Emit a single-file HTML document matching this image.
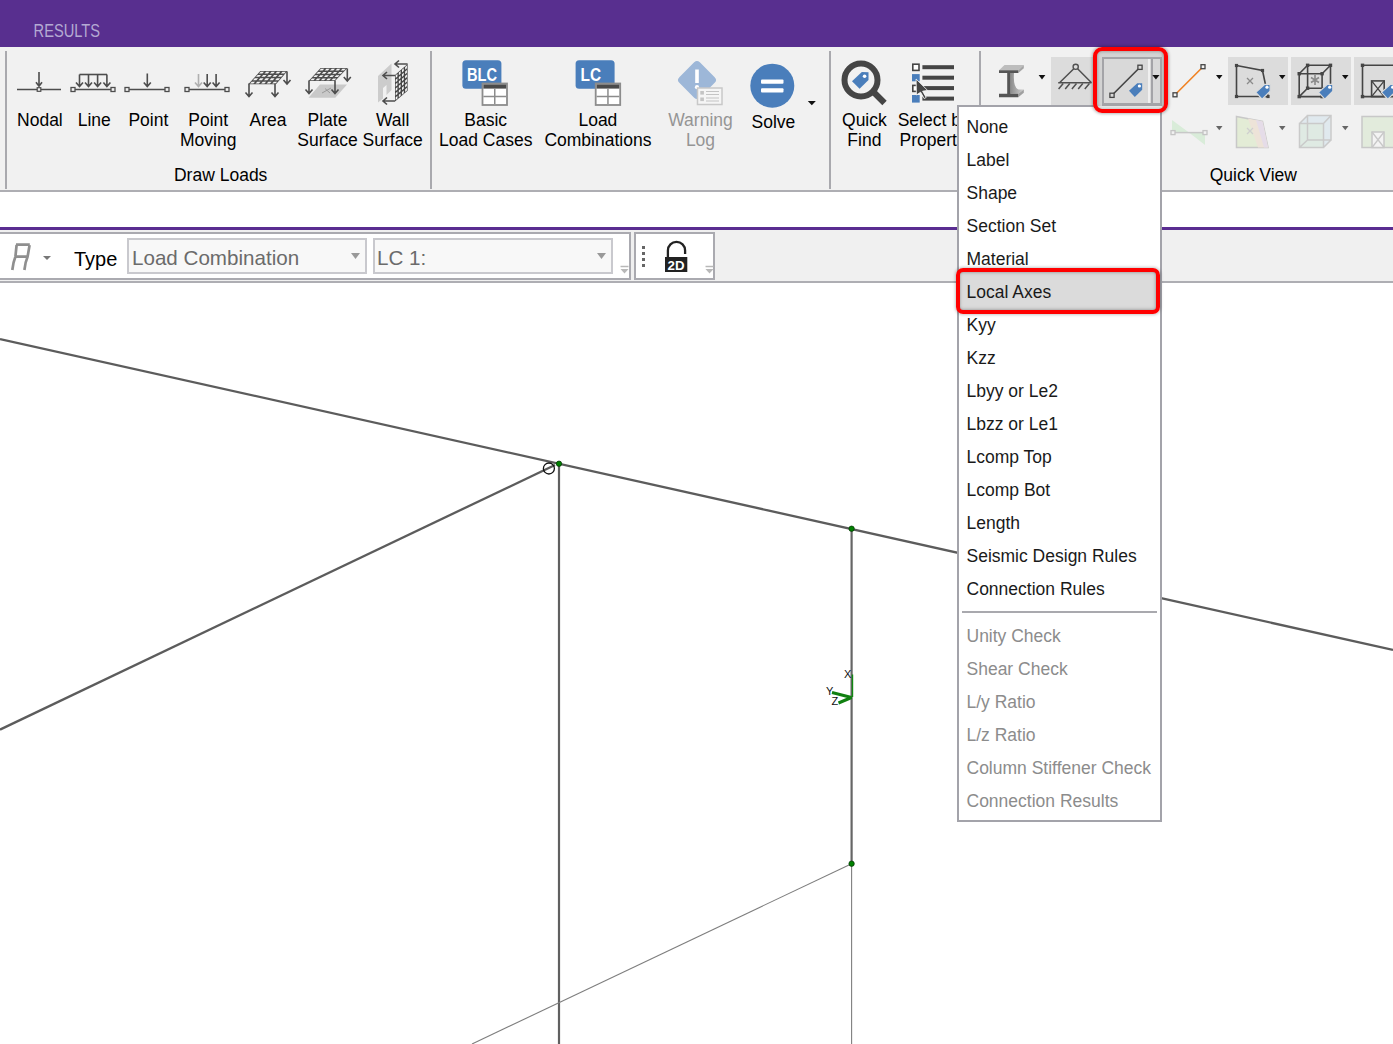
<!DOCTYPE html>
<html><head><meta charset="utf-8"><style>
html,body{margin:0;padding:0;}
body{width:1393px;height:1044px;overflow:hidden;position:relative;background:#fff;font-family:"Liberation Sans", sans-serif;}
.t{position:absolute;line-height:1;white-space:pre;}
</style></head><body>
<div style="position:absolute;left:0px;top:0px;width:1393px;height:47px;background:#582f8f;"></div>
<div style="position:absolute;left:0px;top:47px;width:1393px;height:143px;background:#f1f1f1;"></div>
<div style="position:absolute;left:0px;top:190px;width:1393px;height:2px;background:#aeaeb3;"></div>
<div style="position:absolute;left:0px;top:227px;width:1393px;height:3px;background:#5a2d91;"></div>
<div style="position:absolute;left:0px;top:230px;width:1393px;height:51px;background:#f0f0f0;"></div>
<div style="position:absolute;left:0px;top:281px;width:1393px;height:2px;background:#aeaeb3;"></div>
<div style="position:absolute;left:-2px;top:232px;width:629px;height:44px;background:#fff;border:2px solid #aaaab0;"></div>
<div style="position:absolute;left:634px;top:232px;width:77px;height:44px;background:#fff;border:2px solid #aaaab0;"></div>
<div style="position:absolute;left:127px;top:238px;width:236px;height:32px;background:#f8f8f8;border:2px solid #c9c9ce;"></div>
<div style="position:absolute;left:373px;top:238px;width:236px;height:32px;background:#f8f8f8;border:2px solid #c9c9ce;"></div>
<div style="position:absolute;left:5px;top:51px;width:2px;height:138px;background:#a9a9ae;"></div>
<div style="position:absolute;left:430px;top:51px;width:2px;height:138px;background:#a9a9ae;"></div>
<div style="position:absolute;left:829px;top:51px;width:2px;height:138px;background:#a9a9ae;"></div>
<div style="position:absolute;left:979px;top:51px;width:2px;height:138px;background:#a9a9ae;"></div>
<div style="position:absolute;left:1051px;top:57px;width:42px;height:48px;background:#dcdcdc;"></div>
<div style="position:absolute;left:1228px;top:57px;width:60px;height:48px;background:#dcdcdc;"></div>
<div style="position:absolute;left:1291px;top:57px;width:60px;height:48px;background:#dcdcdc;"></div>
<div style="position:absolute;left:1354px;top:57px;width:60px;height:48px;background:#dcdcdc;"></div>
<svg style="position:absolute;left:0;top:0" width="1393" height="1044" viewBox="0 0 1393 1044"><path d="M17 89.5H61" stroke="#4d4d4d" stroke-width="1.6"/><rect x="37.2" y="87.7" width="3.6" height="3.6" fill="#f1f1f1" stroke="#4d4d4d" stroke-width="1.2"/><path d="M39 72V85.7M36 82.2L39 86.2L42 82.2" fill="none" stroke="#4d4d4d" stroke-width="1.6"/>
<path d="M73 89.5H113" stroke="#4d4d4d" stroke-width="1.6"/><rect x="71.0" y="87.5" width="4" height="4" fill="#f1f1f1" stroke="#4d4d4d" stroke-width="1.3"/><rect x="111.0" y="87.5" width="4" height="4" fill="#f1f1f1" stroke="#4d4d4d" stroke-width="1.3"/>
<path d="M79.5 74.5H107" stroke="#4d4d4d" stroke-width="1.6"/>
<path d="M79.5 74.5V86.0M76.0 82.5L79.5 86.5L83.0 82.5" fill="none" stroke="#4d4d4d" stroke-width="1.6"/>
<path d="M88.5 74.5V86.0M85.0 82.5L88.5 86.5L92.0 82.5" fill="none" stroke="#4d4d4d" stroke-width="1.6"/>
<path d="M97.6 74.5V86.0M94.1 82.5L97.6 86.5L101.1 82.5" fill="none" stroke="#4d4d4d" stroke-width="1.6"/>
<path d="M106.9 74.5V86.0M103.4 82.5L106.9 86.5L110.4 82.5" fill="none" stroke="#4d4d4d" stroke-width="1.6"/>
<path d="M127 89.5H167" stroke="#4d4d4d" stroke-width="1.6"/><rect x="125.0" y="87.5" width="4" height="4" fill="#f1f1f1" stroke="#4d4d4d" stroke-width="1.3"/><rect x="165.0" y="87.5" width="4" height="4" fill="#f1f1f1" stroke="#4d4d4d" stroke-width="1.3"/><path d="M147.3 73.5V86.0M143.8 82.5L147.3 86.5L150.8 82.5" fill="none" stroke="#4d4d4d" stroke-width="1.6"/>
<path d="M187 89.5H227" stroke="#4d4d4d" stroke-width="1.6"/><rect x="185.0" y="87.5" width="4" height="4" fill="#f1f1f1" stroke="#4d4d4d" stroke-width="1.3"/><rect x="225.0" y="87.5" width="4" height="4" fill="#f1f1f1" stroke="#4d4d4d" stroke-width="1.3"/>
<path d="M198.5 74V86.0M195.0 82.5L198.5 86.5L202.0 82.5" fill="none" stroke="#b0b0b0" stroke-width="1.6"/><path d="M207.2 74V86.0M203.7 82.5L207.2 86.5L210.7 82.5" fill="none" stroke="#4d4d4d" stroke-width="1.6"/><path d="M216.1 74V86.0M212.6 82.5L216.1 86.5L219.6 82.5" fill="none" stroke="#4d4d4d" stroke-width="1.6"/>
<polygon points="260.3,71 287.5,71 276,84.2 248.3,84.2" fill="#4d4d4d"/><polygon points="260.73,71.73 264.00,71.73 262.33,73.57 259.05,73.57" fill="#f4f4f4"/><polygon points="266.17,71.73 269.44,71.73 267.79,73.57 264.51,73.57" fill="#f4f4f4"/><polygon points="271.62,71.73 274.89,71.73 273.25,73.57 269.97,73.57" fill="#f4f4f4"/><polygon points="277.07,71.73 280.33,71.73 278.71,73.57 275.43,73.57" fill="#f4f4f4"/><polygon points="282.51,71.73 285.78,71.73 284.17,73.57 280.89,73.57" fill="#f4f4f4"/><polygon points="257.73,75.03 261.02,75.03 259.35,76.87 256.06,76.87" fill="#f4f4f4"/><polygon points="263.20,75.03 266.49,75.03 264.83,76.87 261.54,76.87" fill="#f4f4f4"/><polygon points="268.68,75.03 271.96,75.03 270.32,76.87 267.03,76.87" fill="#f4f4f4"/><polygon points="274.15,75.03 277.43,75.03 275.80,76.87 272.51,76.87" fill="#f4f4f4"/><polygon points="279.62,75.03 282.90,75.03 281.29,76.87 277.99,76.87" fill="#f4f4f4"/><polygon points="254.74,78.33 258.04,78.33 256.37,80.17 253.06,80.17" fill="#f4f4f4"/><polygon points="260.23,78.33 263.53,78.33 261.88,80.17 258.57,80.17" fill="#f4f4f4"/><polygon points="265.73,78.33 269.03,78.33 267.39,80.17 264.08,80.17" fill="#f4f4f4"/><polygon points="271.23,78.33 274.52,78.33 272.90,80.17 269.59,80.17" fill="#f4f4f4"/><polygon points="276.72,78.33 280.02,78.33 278.41,80.17 275.10,80.17" fill="#f4f4f4"/><polygon points="251.74,81.63 255.06,81.63 253.39,83.47 250.07,83.47" fill="#f4f4f4"/><polygon points="257.26,81.63 260.58,81.63 258.92,83.47 255.60,83.47" fill="#f4f4f4"/><polygon points="262.79,81.63 266.10,81.63 264.46,83.47 261.14,83.47" fill="#f4f4f4"/><polygon points="268.31,81.63 271.62,81.63 269.99,83.47 266.67,83.47" fill="#f4f4f4"/><polygon points="273.83,81.63 277.14,81.63 275.53,83.47 272.20,83.47" fill="#f4f4f4"/>
<path d="M249 83.5V96.0M245.5 92.5L249 96.5L252.5 92.5" fill="none" stroke="#4d4d4d" stroke-width="1.6"/><path d="M275 83.5V96.0M271.5 92.5L275 96.5L278.5 92.5" fill="none" stroke="#4d4d4d" stroke-width="1.6"/><path d="M287 71.5V83.5M283.5 80L287 84L290.5 80" fill="none" stroke="#4d4d4d" stroke-width="1.6"/>
<polygon points="320,84.5 347,84.5 335.3,97.8 308.5,97.8" fill="#c9c9c9"/>
<path d="M322 93L331 88M325 88.5L330 93" stroke="#999" stroke-width="1"/>
<polygon points="320.6,68 347.5,68 335,81 308.6,81" fill="#4d4d4d"/><polygon points="321.01,68.72 324.24,68.72 322.55,70.53 319.33,70.53" fill="#f4f4f4"/><polygon points="326.39,68.72 329.61,68.72 327.91,70.53 324.69,70.53" fill="#f4f4f4"/><polygon points="331.76,68.72 334.99,68.72 333.27,70.53 330.05,70.53" fill="#f4f4f4"/><polygon points="337.14,68.72 340.36,68.72 338.63,70.53 335.41,70.53" fill="#f4f4f4"/><polygon points="342.51,68.72 345.74,68.72 343.99,70.53 340.77,70.53" fill="#f4f4f4"/><polygon points="318.01,71.97 321.22,71.97 319.53,73.78 316.33,73.78" fill="#f4f4f4"/><polygon points="323.36,71.97 326.57,71.97 324.86,73.78 321.66,73.78" fill="#f4f4f4"/><polygon points="328.71,71.97 331.92,71.97 330.20,73.78 327.00,73.78" fill="#f4f4f4"/><polygon points="334.06,71.97 337.27,71.97 335.53,73.78 332.33,73.78" fill="#f4f4f4"/><polygon points="339.41,71.97 342.62,71.97 340.87,73.78 337.67,73.78" fill="#f4f4f4"/><polygon points="315.00,75.22 318.20,75.22 316.51,77.03 313.32,77.03" fill="#f4f4f4"/><polygon points="320.33,75.22 323.52,75.22 321.82,77.03 318.63,77.03" fill="#f4f4f4"/><polygon points="325.65,75.22 328.85,75.22 327.13,77.03 323.94,77.03" fill="#f4f4f4"/><polygon points="330.98,75.22 334.17,75.22 332.44,77.03 329.25,77.03" fill="#f4f4f4"/><polygon points="336.30,75.22 339.50,75.22 337.75,77.03 334.56,77.03" fill="#f4f4f4"/><polygon points="312.00,78.47 315.18,78.47 313.49,80.28 310.32,80.28" fill="#f4f4f4"/><polygon points="317.30,78.47 320.48,78.47 318.77,80.28 315.60,80.28" fill="#f4f4f4"/><polygon points="322.60,78.47 325.78,78.47 324.06,80.28 320.89,80.28" fill="#f4f4f4"/><polygon points="327.90,78.47 331.08,78.47 329.34,80.28 326.17,80.28" fill="#f4f4f4"/><polygon points="333.20,78.47 336.38,78.47 334.63,80.28 331.46,80.28" fill="#f4f4f4"/>
<path d="M309 80.5V93.0M305.5 89.5L309 93.5L312.5 89.5" fill="none" stroke="#4d4d4d" stroke-width="1.6"/><path d="M335 80.5V93.0M331.5 89.5L335 93.5L338.5 89.5" fill="none" stroke="#4d4d4d" stroke-width="1.6"/><path d="M347.3 68.5V80.5M343.8 77L347.3 81L350.8 77" fill="none" stroke="#4d4d4d" stroke-width="1.6"/>
<path d="M378 76L391.5 63.5V90L386.5 95V85L383 88V98.5L378 102.5Z" fill="#cccccc"/>
<polygon points="395,75 407.6,64 407.6,90.8 395,101.4" fill="#444"/><polygon points="395.69,75.28 397.46,73.74 397.46,76.39 395.69,77.92" fill="#f4f4f4"/><polygon points="398.84,72.53 400.61,70.99 400.61,73.65 398.84,75.18" fill="#f4f4f4"/><polygon points="401.99,69.78 403.76,68.24 403.76,70.91 401.99,72.44" fill="#f4f4f4"/><polygon points="405.14,67.04 406.91,65.50 406.91,68.18 405.14,69.71" fill="#f4f4f4"/><polygon points="395.69,79.68 397.46,78.15 397.46,80.80 395.69,82.32" fill="#f4f4f4"/><polygon points="398.84,76.95 400.61,75.42 400.61,78.08 398.84,79.60" fill="#f4f4f4"/><polygon points="401.99,74.22 403.76,72.69 403.76,75.36 401.99,76.88" fill="#f4f4f4"/><polygon points="405.14,71.49 406.91,69.96 406.91,72.64 405.14,74.16" fill="#f4f4f4"/><polygon points="395.69,84.08 397.46,82.56 397.46,85.21 395.69,86.73" fill="#f4f4f4"/><polygon points="398.84,81.37 400.61,79.85 400.61,82.51 398.84,84.02" fill="#f4f4f4"/><polygon points="401.99,78.66 403.76,77.14 403.76,79.80 401.99,81.32" fill="#f4f4f4"/><polygon points="405.14,75.94 406.91,74.42 406.91,77.10 405.14,78.62" fill="#f4f4f4"/><polygon points="395.69,88.49 397.46,86.98 397.46,89.62 395.69,91.13" fill="#f4f4f4"/><polygon points="398.84,85.79 400.61,84.28 400.61,86.94 398.84,88.44" fill="#f4f4f4"/><polygon points="401.99,83.09 403.76,81.58 403.76,84.25 401.99,85.76" fill="#f4f4f4"/><polygon points="405.14,80.40 406.91,78.89 406.91,81.56 405.14,83.07" fill="#f4f4f4"/><polygon points="395.69,92.89 397.46,91.39 397.46,94.04 395.69,95.53" fill="#f4f4f4"/><polygon points="398.84,90.21 400.61,88.71 400.61,91.37 398.84,92.86" fill="#f4f4f4"/><polygon points="401.99,87.53 403.76,86.03 403.76,88.70 401.99,90.19" fill="#f4f4f4"/><polygon points="405.14,84.85 406.91,83.35 406.91,86.03 405.14,87.52" fill="#f4f4f4"/><polygon points="395.69,97.29 397.46,95.80 397.46,98.45 395.69,99.94" fill="#f4f4f4"/><polygon points="398.84,94.63 400.61,93.14 400.61,95.80 398.84,97.28" fill="#f4f4f4"/><polygon points="401.99,91.97 403.76,90.48 403.76,93.14 401.99,94.63" fill="#f4f4f4"/><polygon points="405.14,89.30 406.91,87.81 406.91,90.49 405.14,91.98" fill="#f4f4f4"/>
<path d="M407.6 64H395.5M399 60.5L395 64L399 67.5" fill="none" stroke="#4d4d4d" stroke-width="1.6"/><path d="M395 75.5H383.5M387 72.0L383 75.5L387 79.0" fill="none" stroke="#4d4d4d" stroke-width="1.6"/><path d="M395 101H383.5M387 97.5L383 101L387 104.5" fill="none" stroke="#4d4d4d" stroke-width="1.6"/>
<rect x="462.4" y="60.3" width="39" height="28.5" rx="3.5" fill="#4a7ebb"/><text x="467" y="81.4" font-family="Liberation Sans" font-size="18" font-weight="bold" fill="#fff" textLength="30" lengthAdjust="spacingAndGlyphs">BLC</text><rect x="482.5" y="83.5" width="24.5" height="21.5" fill="#fff" stroke="#8c8c8c" stroke-width="1.8"/><rect x="483.4" y="84.4" width="22.7" height="4.2" fill="#4a4a4a"/><path d="M483.4 96.6H506.1M494.75 88.6V104.1" stroke="#8c8c8c" stroke-width="1.5"/>
<rect x="575.6" y="60.3" width="39" height="28.5" rx="3.5" fill="#4a7ebb"/><text x="580.5" y="81.4" font-family="Liberation Sans" font-size="18" font-weight="bold" fill="#fff" textLength="20.5" lengthAdjust="spacingAndGlyphs">LC</text><rect x="595.7" y="83.5" width="24.5" height="21.5" fill="#fff" stroke="#8c8c8c" stroke-width="1.8"/><rect x="596.6" y="84.4" width="22.7" height="4.2" fill="#4a4a4a"/><path d="M596.6 96.6H619.3000000000001M607.95 88.6V104.1" stroke="#8c8c8c" stroke-width="1.5"/>
<rect x="682.5" y="65.5" width="29" height="29" rx="4" transform="rotate(45 697 80)" fill="#9db7d8"/>
<rect x="695.2" y="69.5" width="3.6" height="13.5" fill="#fff"/><circle cx="697" cy="87.2" r="2.1" fill="#fff"/>
<rect x="697.5" y="88" width="24.5" height="16.5" fill="#f5f5f5" stroke="#c8c8c8" stroke-width="1.5"/>
<rect x="700.3" y="91" width="3.6" height="3.6" fill="#c4c4c4"/><rect x="700.3" y="97.5" width="3.6" height="3.6" fill="#c4c4c4"/>
<path d="M706 91.5H719M706 94.5H719M706 98H719M706 101H719" stroke="#c4c4c4" stroke-width="1.2"/>
<circle cx="772.3" cy="85.7" r="22" fill="#4a7ebb"/>
<rect x="761" y="79.4" width="22.5" height="4.4" rx="1" fill="#fff"/><rect x="761" y="88.2" width="22.5" height="4.4" rx="1" fill="#fff"/>
<path d="M807.8 101H815.8L811.8 105.3Z" fill="#111"/>
<circle cx="861" cy="80" r="16.5" fill="none" stroke="#454545" stroke-width="6"/>
<path d="M873.5 92L884.5 103" stroke="#454545" stroke-width="6.2"/>
<polygon points="852,81.3 861.8,71.9 868.5,72.2 868.5,80 859.6,88.8" fill="#4a7ebb"/><circle cx="864.6" cy="76.3" r="1.8" fill="#fff"/>
<rect x="912.8" y="64.2" width="6.2" height="6.2" fill="#fff" stroke="#454545" stroke-width="1.6"/>
<rect x="912" y="74.1" width="7.7" height="7.2" fill="#4a7ebb"/>
<rect x="912.8" y="85.4" width="6.2" height="6" fill="#fff" stroke="#454545" stroke-width="1.6"/>
<rect x="912" y="95" width="7.7" height="7.6" fill="#4a7ebb"/>
<rect x="922.4" y="65.2" width="31.6" height="4" fill="#454545"/>
<rect x="922.4" y="75.7" width="31.6" height="4" fill="#454545"/>
<rect x="922.4" y="86.1" width="31.6" height="4" fill="#454545"/>
<rect x="922.4" y="96.6" width="31.6" height="4" fill="#454545"/>
<polygon points="916.1,79 916.4,95 920.6,92.2 924.2,98.6 926.2,97.4 922.6,91.2 927.6,90.4" fill="#454545" stroke="#fff" stroke-width="0.8"/>
<defs><linearGradient id="webg" x1="0" y1="0" x2="1" y2="0"><stop offset="0" stop-color="#8c8c8c"/><stop offset="1" stop-color="#d0d0d0"/></linearGradient></defs>
<polygon points="999,70.2 1018.3,70.2 1023.8,65 1004.5,65" fill="#bdbdbd"/>
<polygon points="1018.3,70.2 1023.8,65 1023.8,68.2 1018.3,73" fill="#a5a5a5"/>
<path d="M1010.5 73H1014Q1013 87.5 1018.5 89.4H1023.8L1018.3 93.8H1010.5Z" fill="url(#webg)"/>
<polygon points="1018.3,93.8 1023.8,89.4 1023.8,92.7 1018.3,97.2" fill="#a0a0a0"/>
<path d="M999 70.2H1018.3V73H1010.5V93.8H1018.3V97.2H999V93.8H1007.2V73H999Z" fill="#555"/>
<path d="M1038.6 75H1045.4L1042 79.5Z" fill="#111"/>
<path d="M1073.8 68.8L1059.5 82.7M1077.6 68.8L1091.5 82.7M1058.2 82.7H1091.5" fill="none" stroke="#505050" stroke-width="1.5"/>
<circle cx="1075.7" cy="66.8" r="2.6" fill="#dcdcdc" stroke="#505050" stroke-width="1.4"/>
<path d="M1063.2 83.5L1058.6 89M1069.8 83.5L1065.2 89M1076.5 83.5L1071.9 89M1082.8 83.5L1078.2 89M1089.4 83.5L1084.8 89" stroke="#505050" stroke-width="1.5"/>
<path d="M1175 94.8L1203 66.7" stroke="#f08020" stroke-width="1.6"/><rect x="1173.0" y="92.8" width="4" height="4" fill="#f1f1f1" stroke="#444" stroke-width="1.3"/><rect x="1201.0" y="64.7" width="4" height="4" fill="#f1f1f1" stroke="#444" stroke-width="1.3"/>
<path d="M1216 75H1222.5L1219.25 79.3Z" fill="#111"/>
<polygon points="1236.5,65.5 1262.5,70.5 1268,96.5 1236.5,96.5" fill="none" stroke="#454545" stroke-width="1.6"/>
<rect x="1234.9" y="63.9" width="3.2" height="3.2" fill="#454545"/>
<rect x="1260.9" y="68.9" width="3.2" height="3.2" fill="#454545"/>
<rect x="1266.4" y="94.9" width="3.2" height="3.2" fill="#454545"/>
<rect x="1234.9" y="94.9" width="3.2" height="3.2" fill="#454545"/>
<path d="M1247 78L1253 84M1253 78L1247 84" stroke="#8a8a8a" stroke-width="1.3"/>
<polygon points="1255.8,92.4 1264.8,84.3 1270.1,84.3 1270.1,91.3 1262.1,99.1" fill="#4a7ebb" stroke="#dcdcdc" stroke-width="1.2"/><circle cx="1267.0" cy="87.2" r="1.6" fill="#fff"/>
<path d="M1279 75H1285.5L1282.25 79.3Z" fill="#111"/>
<path d="M1299.2 73.7H1322.1V96.6H1299.2ZM1307.6 65.3H1330.5V88.2H1307.6ZM1299.2 73.7L1307.6 65.3M1322.1 73.7L1330.5 65.3M1322.1 96.6L1330.5 88.2M1299.2 96.6L1307.6 88.2" fill="none" stroke="#454545" stroke-width="1.6"/>
<rect x="1297.5" y="72.0" width="3.4" height="3.4" fill="#454545"/>
<rect x="1320.3999999999999" y="72.0" width="3.4" height="3.4" fill="#454545"/>
<rect x="1297.5" y="94.89999999999999" width="3.4" height="3.4" fill="#454545"/>
<rect x="1320.3999999999999" y="94.89999999999999" width="3.4" height="3.4" fill="#454545"/>
<rect x="1305.8999999999999" y="63.599999999999994" width="3.4" height="3.4" fill="#454545"/>
<rect x="1328.8" y="63.599999999999994" width="3.4" height="3.4" fill="#454545"/>
<rect x="1305.8999999999999" y="86.5" width="3.4" height="3.4" fill="#454545"/>
<path d="M1315 75V85M1311 77.5L1319 82.5M1319 77.5L1311 82.5" stroke="#8a8a8a" stroke-width="1.6"/>
<polygon points="1318.5,92.4 1327.5,84.3 1332.8,84.3 1332.8,91.3 1324.8,99.1" fill="#4a7ebb" stroke="#dcdcdc" stroke-width="1.2"/><circle cx="1329.7" cy="87.2" r="1.6" fill="#fff"/>
<path d="M1342 75H1348.5L1345.25 79.3Z" fill="#111"/>
<path d="M1362.5 65.3H1400M1362.5 65.3V96.6H1400" fill="none" stroke="#454545" stroke-width="1.6"/>
<rect x="1360.8" y="63.599999999999994" width="3.4" height="3.4" fill="#454545"/>
<rect x="1360.8" y="94.89999999999999" width="3.4" height="3.4" fill="#454545"/>
<rect x="1371.6" y="80.9" width="12.6" height="15.7" fill="none" stroke="#454545" stroke-width="1.6"/><path d="M1371.6 80.9L1384.2 96.6M1384.2 80.9L1371.6 96.6" stroke="#454545" stroke-width="1.3"/>
<polygon points="1381.5,92.4 1390.5,84.3 1395.8,84.3 1395.8,91.3 1387.8,99.1" fill="#4a7ebb" stroke="#dcdcdc" stroke-width="1.2"/><circle cx="1392.7" cy="87.2" r="1.6" fill="#fff"/>
<polygon points="1172,120 1189,132.6 1172,132.6" fill="#d9ecd9"/><polygon points="1189,132.6 1205,132.6 1205,145" fill="#d9ecd9"/>
<path d="M1173 132.6H1204.5" stroke="#c8c8c8" stroke-width="1.5"/><rect x="1171.0" y="130.6" width="4" height="4" fill="#f1f1f1" stroke="#c4c4c4" stroke-width="1.3"/><rect x="1203.0" y="130.6" width="4" height="4" fill="#f1f1f1" stroke="#c4c4c4" stroke-width="1.3"/>
<path d="M1216 126H1222.5L1219.25 130.3Z" fill="#666"/>
<polygon points="1236.5,116.5 1262.5,121.5 1268,147.5 1236.5,147.5" fill="#e3ecd6" stroke="#c8c8c8" stroke-width="1.5"/>
<polygon points="1248,118.5 1262.5,121.5 1268,147.5 1258,147.5" fill="#ede3d8"/>
<polygon points="1256,120 1262.5,121.5 1268,147.5 1264,147.5" fill="#e5dce8"/>
<path d="M1247 128L1253 134M1253 128L1247 134" stroke="#cfcfcf" stroke-width="1.3"/>
<path d="M1279 126H1285.5L1282.25 130.3Z" fill="#666"/>
<rect x="1299.5" y="123.5" width="24" height="24" fill="#dfeae3"/><polygon points="1307.5,115.5 1331,115.5 1331,140 1323.5,147.5 1323.5,123.5 1299.5,123.5" fill="#e0e9ee"/>
<path d="M1299.5 123.5H1323.5V147.5H1299.5ZM1307.5 115.5H1331V140H1307.5ZM1299.5 123.5L1307.5 115.5M1323.5 123.5L1331 115.5M1323.5 147.5L1331 140M1299.5 147.5L1307.5 140" fill="none" stroke="#cacaca" stroke-width="1.5"/>
<path d="M1342 126H1348.5L1345.25 130.3Z" fill="#666"/>
<rect x="1362" y="116.5" width="40" height="31" fill="#e2ebdc" stroke="#c8c8c8" stroke-width="1.5"/>
<rect x="1372" y="132" width="12" height="15.5" fill="#f3f3f3" stroke="#c8c8c8" stroke-width="1.5"/><path d="M1372 132L1384 147.5M1384 132L1372 147.5" stroke="#c8c8c8" stroke-width="1.3"/>
<path d="M16 244.6H29.8M16.6 245L15.4 256.7Q13.2 262 12.3 270M29.6 245L27.6 256.7Q25.2 262 24.4 270M15.4 256.7H27.6" fill="none" stroke="#8f8f8f" stroke-width="2.7"/>
<path d="M43 256H51L47 260Z" fill="#777"/>
<path d="M351 253H360L355.5 259Z" fill="#999"/>
<path d="M597 253H606L601.5 259Z" fill="#999"/>
<path d="M620.5 266.5H628.5" stroke="#b8b8b8" stroke-width="1.5"/><path d="M620.5 269H628.5L624.5 273.5Z" fill="#b8b8b8"/>
<path d="M705.5 266.5H713.5" stroke="#b8b8b8" stroke-width="1.5"/><path d="M705.5 269H713.5L709.5 273.5Z" fill="#b8b8b8"/>
<rect x="642" y="246" width="3" height="3" fill="#666"/>
<rect x="642" y="252" width="3" height="3" fill="#666"/>
<rect x="642" y="258" width="3" height="3" fill="#666"/>
<rect x="642" y="264" width="3" height="3" fill="#666"/>
<path d="M667.9 257V250.5A8.6 8.6 0 0 1 685.1 250.5V254" fill="none" stroke="#222" stroke-width="2.3"/>
<rect x="665" y="257" width="22.3" height="15" fill="#222"/>
<text x="667.6" y="270" font-family="Liberation Sans" font-weight="bold" font-size="12.5" fill="#fff" textLength="17" lengthAdjust="spacingAndGlyphs">2D</text>
<path d="M0 339L1393 649.9" stroke="#5c5c5c" stroke-width="2.3"/>
<path d="M0 729.6L555 465" stroke="#5c5c5c" stroke-width="2.3"/>
<path d="M559 464V1044" stroke="#606060" stroke-width="2.2"/>
<path d="M851.6 528.7V863.7" stroke="#666" stroke-width="2.2"/>
<path d="M851.6 863.7V1044" stroke="#7e7e7e" stroke-width="1.1"/>
<path d="M851.6 863.7L472 1044" stroke="#7e7e7e" stroke-width="1.1"/>
<circle cx="559" cy="463.7" r="2.7" fill="#008000" stroke="#003000" stroke-width="0.7"/>
<circle cx="851.6" cy="528.7" r="2.7" fill="#008000" stroke="#003000" stroke-width="0.7"/>
<circle cx="851.6" cy="863.7" r="2.7" fill="#008000" stroke="#003000" stroke-width="0.7"/>
<circle cx="548.9" cy="468.5" r="5.5" fill="none" stroke="#111" stroke-width="1.3"/>
<path d="M852.5 674.5V697" stroke="#118811" stroke-width="1.4"/>
<path d="M832 692.5L851.5 697.5L838.5 703" fill="none" stroke="#108010" stroke-width="3" stroke-linejoin="bevel"/>
<text x="844" y="677.7" font-family="Liberation Sans" font-size="11" fill="#111">X</text>
<text x="826" y="694.7" font-family="Liberation Sans" font-size="11" fill="#111">Y</text>
<text x="831.5" y="704.7" font-family="Liberation Sans" font-size="11" fill="#111">Z</text></svg>
<svg style="position:absolute;left:0;top:0" width="200" height="47"><text x="33.6" y="37" font-family="Liberation Sans" font-size="17.8" fill="#b4aad3" textLength="66.5" lengthAdjust="spacingAndGlyphs">RESULTS</text></svg>
<div class="t" style="left:-30.1px;top:112.2px;width:140px;text-align:center;font-size:17.5px;color:#000;">Nodal</div>
<div class="t" style="left:24.3px;top:112.2px;width:140px;text-align:center;font-size:17.5px;color:#000;">Line</div>
<div class="t" style="left:78.4px;top:112.2px;width:140px;text-align:center;font-size:17.5px;color:#000;">Point</div>
<div class="t" style="left:138.2px;top:112.2px;width:140px;text-align:center;font-size:17.5px;color:#000;">Point</div>
<div class="t" style="left:138.2px;top:132.2px;width:140px;text-align:center;font-size:17.5px;color:#000;">Moving</div>
<div class="t" style="left:198.0px;top:112.2px;width:140px;text-align:center;font-size:17.5px;color:#000;">Area</div>
<div class="t" style="left:257.5px;top:112.2px;width:140px;text-align:center;font-size:17.5px;color:#000;">Plate</div>
<div class="t" style="left:257.5px;top:132.2px;width:140px;text-align:center;font-size:17.5px;color:#000;">Surface</div>
<div class="t" style="left:322.7px;top:112.2px;width:140px;text-align:center;font-size:17.5px;color:#000;">Wall</div>
<div class="t" style="left:322.7px;top:132.2px;width:140px;text-align:center;font-size:17.5px;color:#000;">Surface</div>
<div class="t" style="left:415.7px;top:112.2px;width:140px;text-align:center;font-size:17.5px;color:#000;">Basic</div>
<div class="t" style="left:415.7px;top:132.2px;width:140px;text-align:center;font-size:17.5px;color:#000;">Load Cases</div>
<div class="t" style="left:527.9px;top:112.2px;width:140px;text-align:center;font-size:17.5px;color:#000;">Load</div>
<div class="t" style="left:527.9px;top:132.2px;width:140px;text-align:center;font-size:17.5px;color:#000;">Combinations</div>
<div class="t" style="left:794.4px;top:112.2px;width:140px;text-align:center;font-size:17.5px;color:#000;">Quick</div>
<div class="t" style="left:794.4px;top:132.2px;width:140px;text-align:center;font-size:17.5px;color:#000;">Find</div>
<div class="t" style="left:630.5px;top:112.2px;width:140px;text-align:center;font-size:17.5px;color:#959595;">Warning</div>
<div class="t" style="left:630.5px;top:132.2px;width:140px;text-align:center;font-size:17.5px;color:#959595;">Log</div>
<div class="t" style="left:703.4px;top:114.2px;width:140px;text-align:center;font-size:17.5px;color:#000;">Solve</div>
<div class="t" style="left:897.7px;top:112.2px;font-size:17.5px;color:#000;">Select by</div>
<div class="t" style="left:899.5px;top:132.2px;font-size:17.5px;color:#000;">Property</div>
<div class="t" style="left:120.7px;top:166.7px;width:200px;text-align:center;font-size:17.5px;color:#000;">Draw Loads</div>
<div class="t" style="left:1153.3px;top:166.7px;width:200px;text-align:center;font-size:17.5px;color:#000;">Quick View</div>
<div class="t" style="left:74.0px;top:249.1px;font-size:20px;color:#000;">Type</div>
<div class="t" style="left:132.0px;top:247.6px;font-size:20.6px;color:#6b6b6b;">Load Combination</div>
<div class="t" style="left:377.0px;top:247.6px;font-size:20.6px;color:#6b6b6b;">LC 1:</div>
<div style="position:absolute;left:957px;top:105px;width:201px;height:713px;background:#fff;border:2px solid #a3a3aa;"></div>
<div style="position:absolute;left:962px;top:611px;width:195px;height:2px;background:#a9a9ae;"></div>
<div style="position:absolute;left:959px;top:272px;width:197px;height:38px;background:#dbdbdb;box-shadow:inset 0 0 4px rgba(0,0,0,0.28);"></div>
<div class="t" style="left:966.5px;top:119.2px;font-size:17.5px;color:#1a1a1a;">None</div>
<div class="t" style="left:966.5px;top:152.2px;font-size:17.5px;color:#1a1a1a;">Label</div>
<div class="t" style="left:966.5px;top:185.2px;font-size:17.5px;color:#1a1a1a;">Shape</div>
<div class="t" style="left:966.5px;top:218.2px;font-size:17.5px;color:#1a1a1a;">Section Set</div>
<div class="t" style="left:966.5px;top:251.2px;font-size:17.5px;color:#1a1a1a;">Material</div>
<div class="t" style="left:966.5px;top:284.2px;font-size:17.5px;color:#1a1a1a;">Local Axes</div>
<div class="t" style="left:966.5px;top:317.2px;font-size:17.5px;color:#1a1a1a;">Kyy</div>
<div class="t" style="left:966.5px;top:350.2px;font-size:17.5px;color:#1a1a1a;">Kzz</div>
<div class="t" style="left:966.5px;top:383.2px;font-size:17.5px;color:#1a1a1a;">Lbyy or Le2</div>
<div class="t" style="left:966.5px;top:416.2px;font-size:17.5px;color:#1a1a1a;">Lbzz or Le1</div>
<div class="t" style="left:966.5px;top:449.2px;font-size:17.5px;color:#1a1a1a;">Lcomp Top</div>
<div class="t" style="left:966.5px;top:482.2px;font-size:17.5px;color:#1a1a1a;">Lcomp Bot</div>
<div class="t" style="left:966.5px;top:515.2px;font-size:17.5px;color:#1a1a1a;">Length</div>
<div class="t" style="left:966.5px;top:548.2px;font-size:17.5px;color:#1a1a1a;">Seismic Design Rules</div>
<div class="t" style="left:966.5px;top:581.2px;font-size:17.5px;color:#1a1a1a;">Connection Rules</div>
<div class="t" style="left:966.5px;top:628.2px;font-size:17.5px;color:#8c8c8c;">Unity Check</div>
<div class="t" style="left:966.5px;top:661.2px;font-size:17.5px;color:#8c8c8c;">Shear Check</div>
<div class="t" style="left:966.5px;top:694.2px;font-size:17.5px;color:#8c8c8c;">L/y Ratio</div>
<div class="t" style="left:966.5px;top:727.2px;font-size:17.5px;color:#8c8c8c;">L/z Ratio</div>
<div class="t" style="left:966.5px;top:760.2px;font-size:17.5px;color:#8c8c8c;">Column Stiffener Check</div>
<div class="t" style="left:966.5px;top:793.2px;font-size:17.5px;color:#8c8c8c;">Connection Results</div>
<div style="position:absolute;left:1096px;top:50px;width:68px;height:60px;background:#d3d3d3;box-shadow:inset 0 0 5px rgba(0,0,0,0.22);"></div>
<div style="position:absolute;left:1104px;top:59px;width:56px;height:45px;background:#d9d9d9;"></div>
<div style="position:absolute;left:1102px;top:57px;width:56px;height:44px;border:2px solid #a4a4a8;border-bottom-width:3px;"></div>
<div style="position:absolute;left:1098px;top:106px;width:64px;height:3px;background:#e6e8e8;"></div>
<div style="position:absolute;left:1148px;top:59px;width:2px;height:44px;background:#f0f0f0;"></div>
<div style="position:absolute;left:1151px;top:59px;width:1.5px;height:44px;background:#a4a4a8;"></div>
<svg style="position:absolute;left:0;top:0" width="1393" height="1044" viewBox="0 0 1393 1044"><path d="M1112 95.3L1140 67.3" stroke="#444" stroke-width="1.6"/><rect x="1109.9" y="93.2" width="4.2" height="4.2" fill="#d9d9d9" stroke="#444" stroke-width="1.3"/><rect x="1137.9" y="65.2" width="4.2" height="4.2" fill="#d9d9d9" stroke="#444" stroke-width="1.3"/><polygon points="1129.0,90.8 1137.3,83.3 1142.2,83.3 1142.2,89.8 1134.8,97.0" fill="#4a7ebb" stroke="none" stroke-width="0"/><circle cx="1139.4" cy="86.0" r="1.6" fill="#fff"/><path d="M1152.3 75H1159.5L1155.9 79.5Z" fill="#111"/></svg>
<div style="position:absolute;box-sizing:border-box;left:1092.5px;top:46.5px;width:75px;height:66.8px;border:4.4px solid #ff0000;border-radius:9px;box-shadow:0 0 3px 1px rgba(0,0,0,0.28), inset 0 0 3px rgba(0,0,0,0.25);"></div>
<div style="position:absolute;box-sizing:border-box;left:955.5px;top:268px;width:204.5px;height:46.3px;border:4.3px solid #ff0000;border-radius:7px;box-shadow:0 0 3px 1px rgba(0,0,0,0.22), inset 0 0 2px rgba(0,0,0,0.2);"></div>

</body></html>
